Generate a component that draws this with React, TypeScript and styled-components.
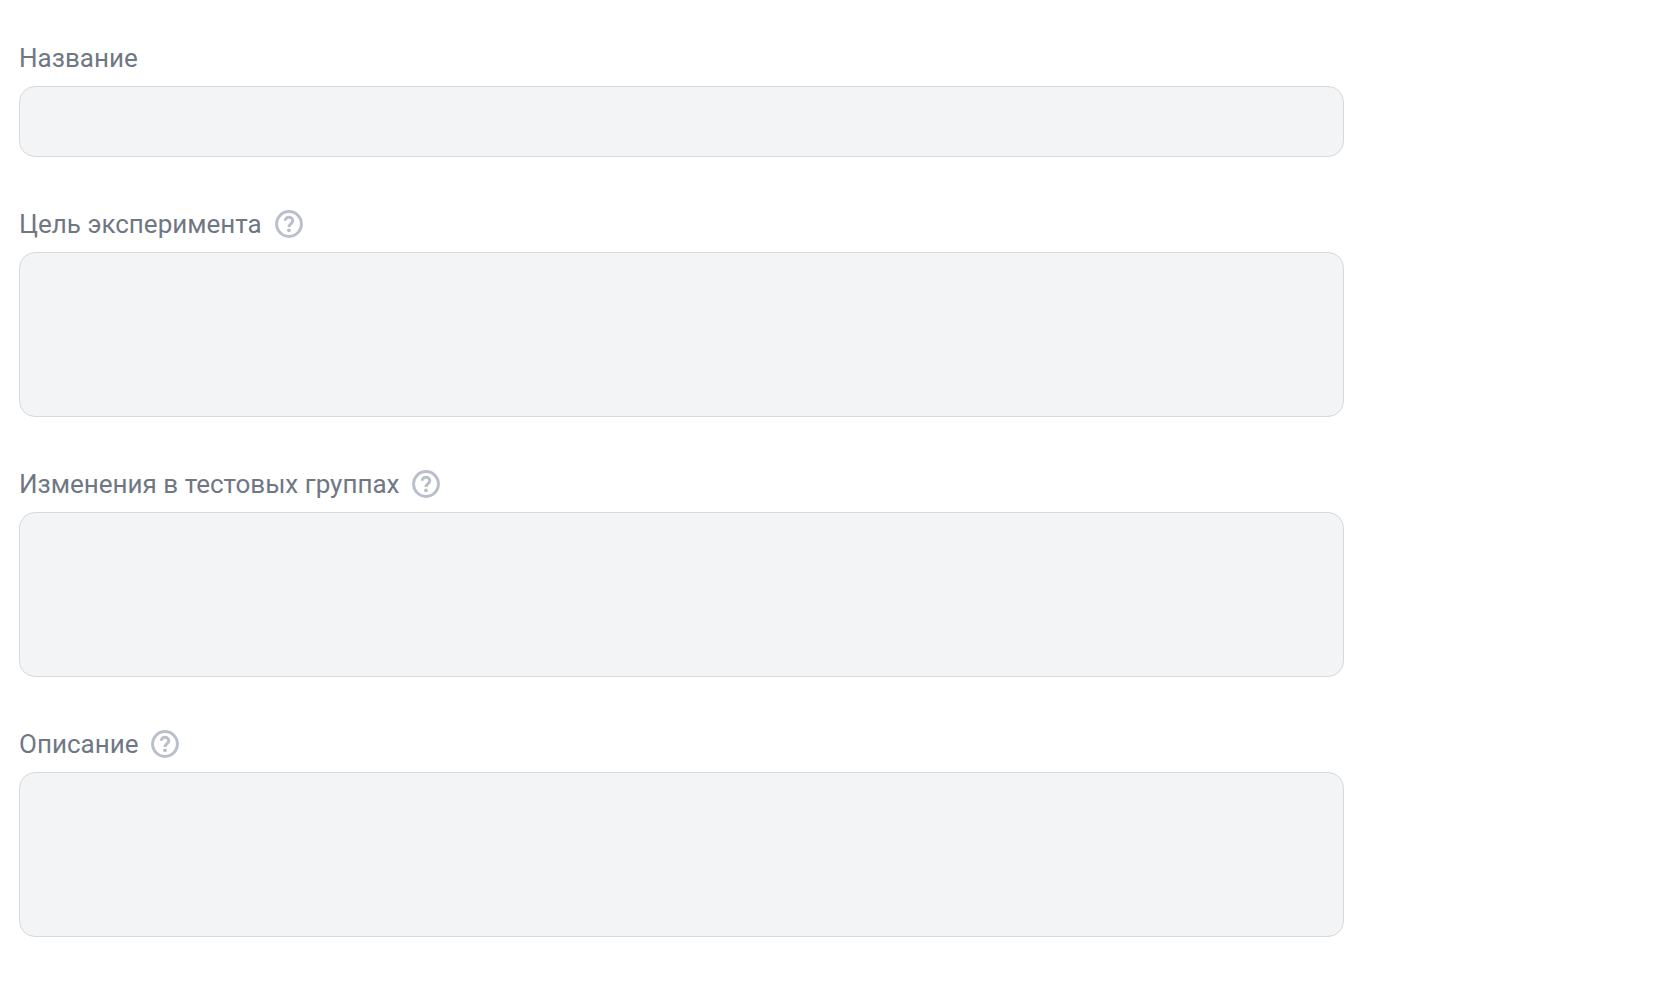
import React, { useId } from "react";
import styled, { createGlobalStyle, css } from "styled-components";

const GlobalStyle = createGlobalStyle`
  *, *::before, *::after { box-sizing: border-box; }
  body {
    margin: 0;
    background: #ffffff;
    font-family: Roboto, "Noto Sans", sans-serif;
  }
`;

const Form = styled.form`
  display: flex;
  flex-direction: column;
  gap: 51px;
  width: 81.16%;
  padding: 42px 0 48px 19px;
`;

const Field = styled.div`
  display: flex;
  flex-direction: column;
  gap: 12px;
`;

const Heading = styled.div`
  display: flex;
  align-items: center;
  gap: 12px;
  height: 32px;
`;

const Label = styled.label`
  color: #6f7784;
  font-size: 26px;
  line-height: 32px;
`;

const HelpButton = styled.button`
  display: flex;
  padding: 0;
  border: 0;
  background: none;
  color: #b9bfcb;
  cursor: pointer;
`;

const box = css`
  display: block;
  width: 100%;
  padding: 16px 20px;
  border: 1px solid #d6d8da;
  border-radius: 16px;
  background: #f2f4f5;
  color: #30363f;
  font: inherit;
  font-size: 26px;
`;

const TextInput = styled.input`
  ${box}
  height: 71px;
`;

const TextArea = styled.textarea`
  ${box}
  height: 165px;
  resize: none;
`;

function HelpIcon() {
  return (
    <svg width="30" height="30" viewBox="0 0 30 30" fill="none" aria-hidden="true">
      <circle cx="15" cy="15" r="12.4" stroke="currentColor" strokeWidth="3" />
      <path
        d="M11.2 11.8a3.8 3.6 0 0 1 7.6 0c0 2.8-3.8 3-3.8 6.3"
        stroke="currentColor"
        strokeWidth="3"
      />
      <circle cx="15" cy="21.3" r="1.9" fill="currentColor" />
    </svg>
  );
}

type FormFieldProps = { label: string; multiline?: boolean };

function FormField({ label, multiline }: FormFieldProps) {
  const id = useId();
  return (
    <Field>
      <Heading>
        <Label htmlFor={id}>{label}</Label>
        {multiline && (
          <HelpButton type="button" aria-label="?">
            <HelpIcon />
          </HelpButton>
        )}
      </Heading>
      {multiline ? <TextArea id={id} /> : <TextInput id={id} type="text" />}
    </Field>
  );
}

export default function App() {
  return (
    <>
      <GlobalStyle />
      <Form>
        <FormField label="Название" />
        <FormField label="Цель эксперимента" multiline />
        <FormField label="Изменения в тестовых группах" multiline />
        <FormField label="Описание" multiline />
      </Form>
    </>
  );
}
